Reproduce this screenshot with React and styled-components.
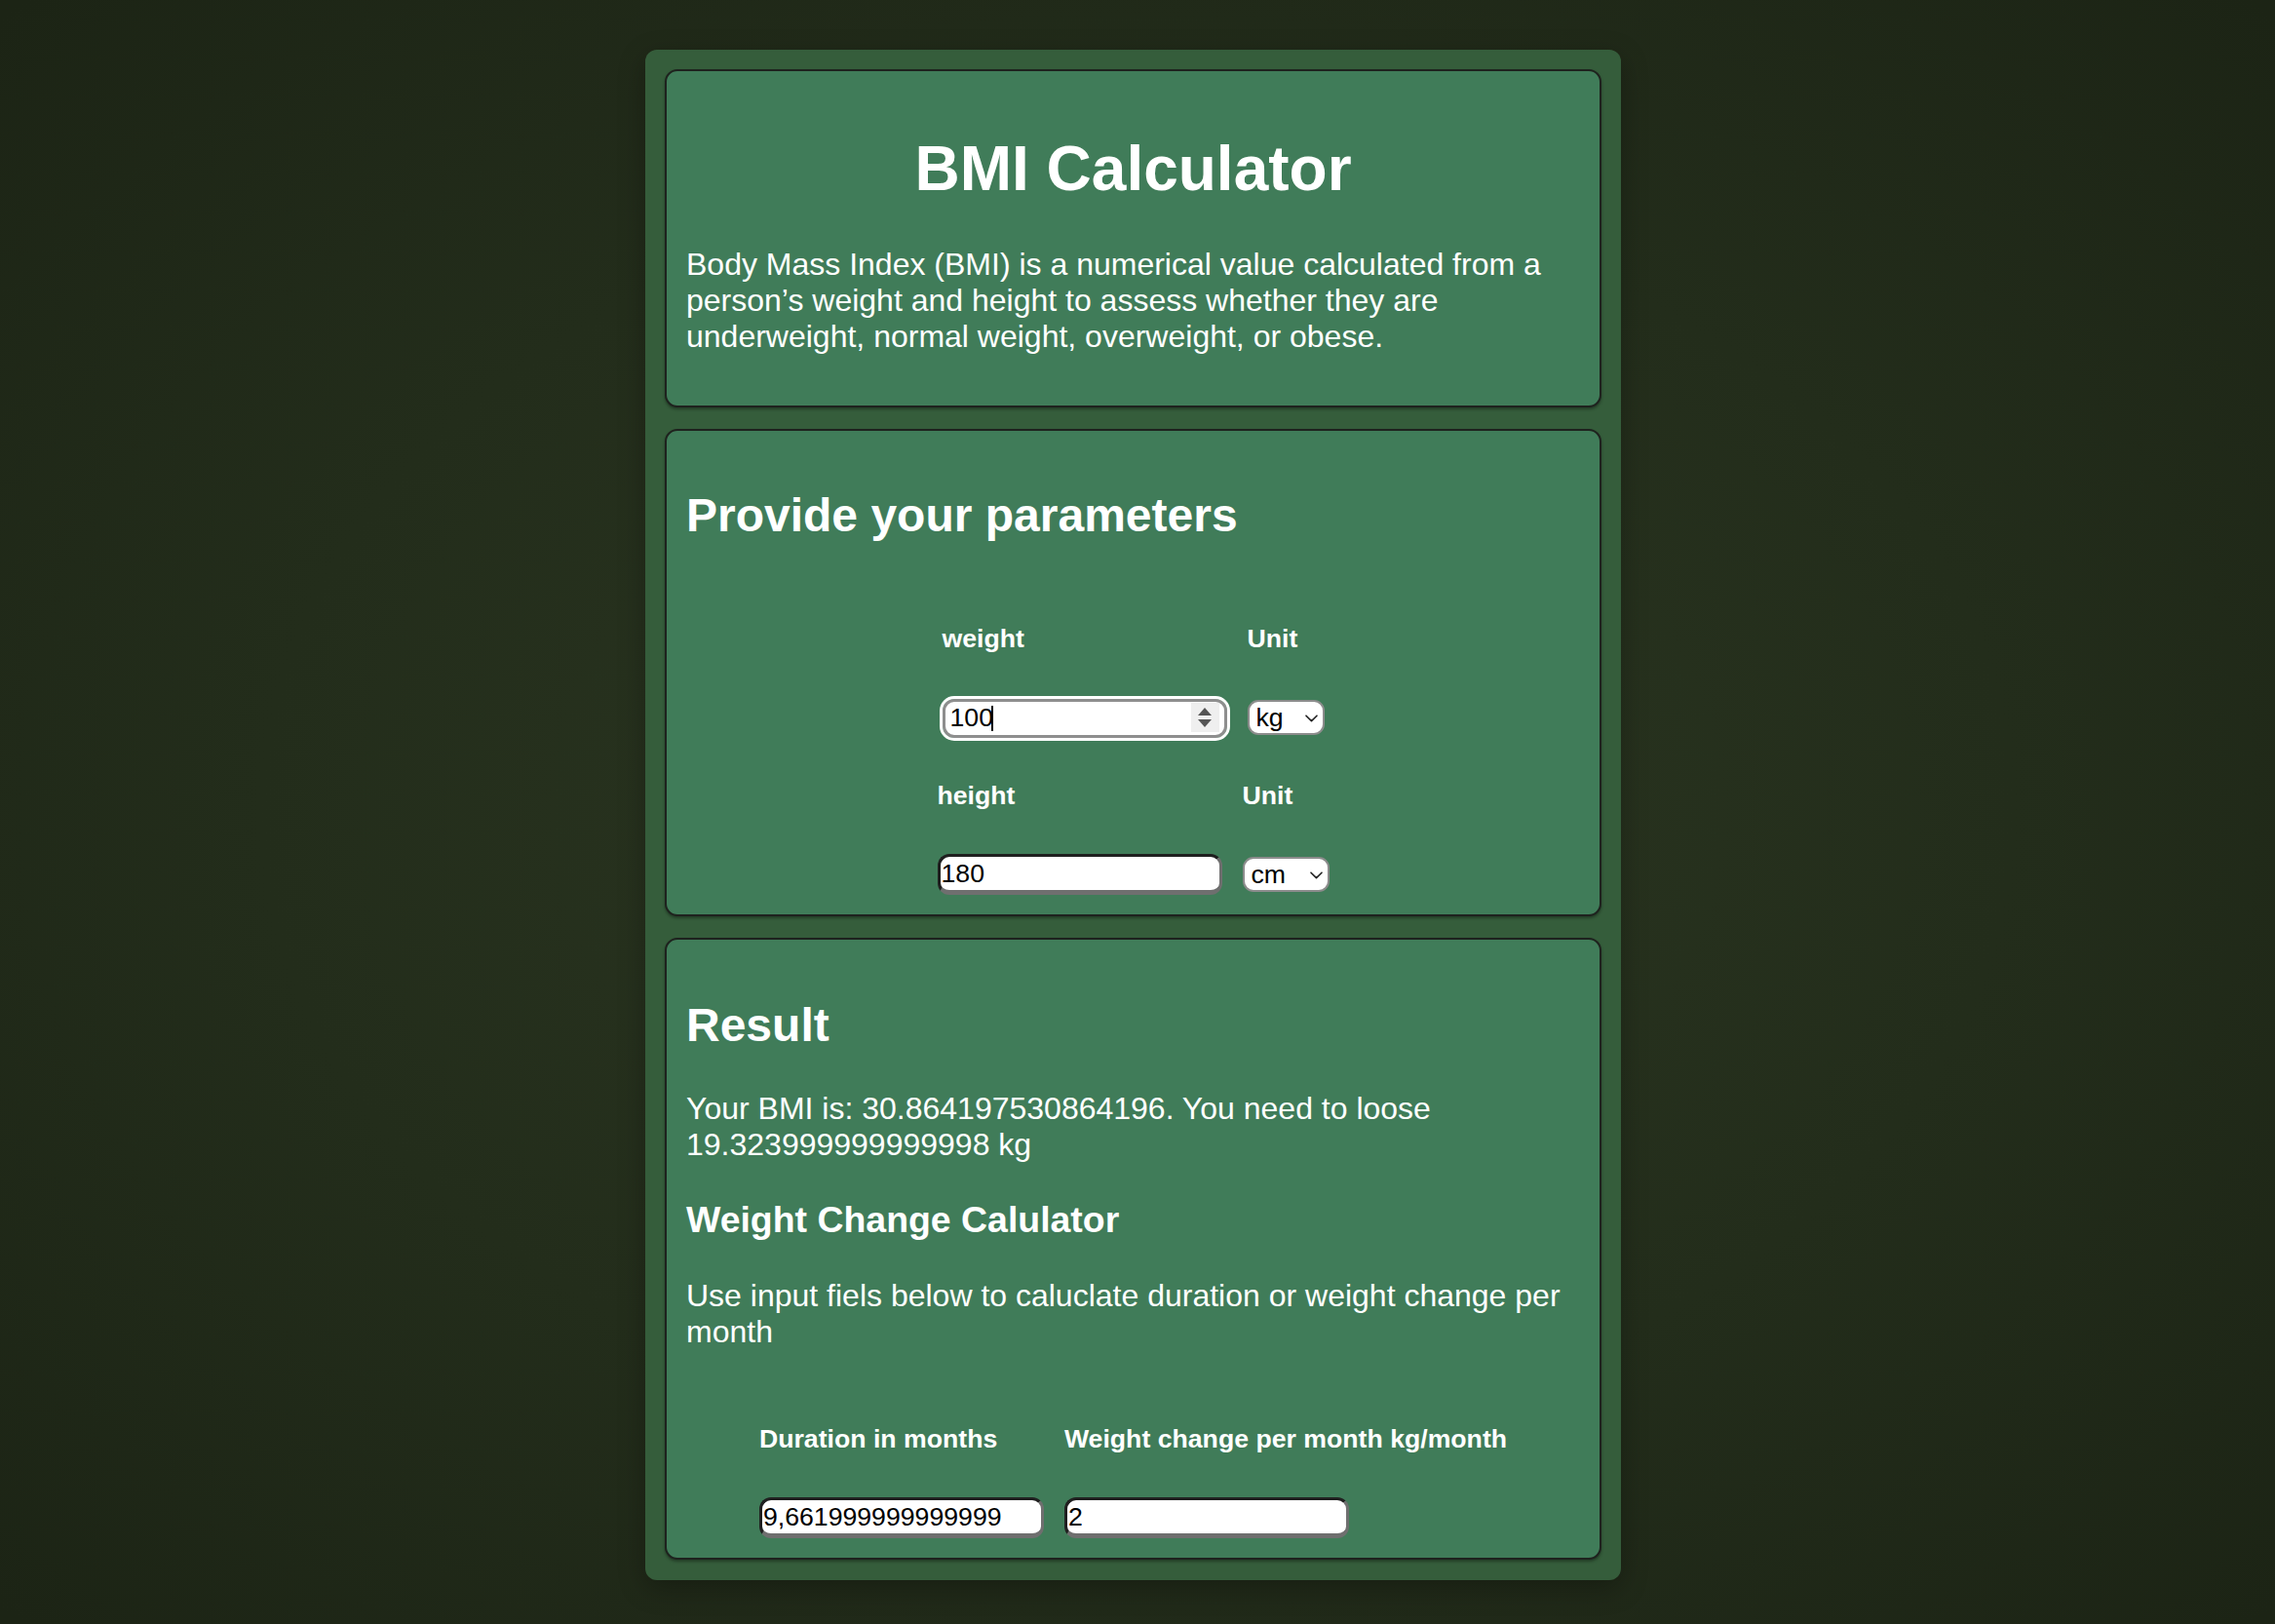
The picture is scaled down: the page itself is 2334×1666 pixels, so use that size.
import React from "react";
import styled, { createGlobalStyle } from "styled-components";

const GlobalStyle = createGlobalStyle`
  html, body {
    margin: 0;
    padding: 0;
  }
  body {
    min-height: 100vh;
    font-family: "Liberation Sans", Arial, Helvetica, sans-serif;
    color: #ffffff;
    background: radial-gradient(ellipse 70% 70% at 50% 50%, #2b3621 0%, #232d1b 55%, #1c2415 100%);
    background-attachment: fixed;
  }
`;

const Page = styled.div`
  display: flex;
  justify-content: center;
  padding: 51px 9px 48px 0;
`;

const Container = styled.main`
  width: 1001px;
  box-sizing: border-box;
  padding: 20px 20px 21px;
  display: flex;
  flex-direction: column;
  gap: 22px;
  background: #355d3b;
  border-radius: 12px;
  box-shadow: 0 8px 28px rgba(0, 0, 0, 0.28);
`;

const Card = styled.section`
  background: #407c59;
  border: 2px solid #1e221e;
  border-radius: 13px;
  padding: 20px;
  box-shadow: 0 2px 3px rgba(0, 0, 0, 0.35);
`;

const Title = styled.h1`
  font-size: 64px;
  font-weight: 700;
  text-align: center;
  margin: 42.9px 0;
  line-height: normal;
`;

const SectionTitle = styled.h2`
  font-size: 48px;
  font-weight: 700;
  margin: 39.7px 0;
  line-height: normal;
`;

const SubTitle = styled.h3`
  font-size: 37.44px;
  font-weight: 700;
  margin: 37.4px 0;
  line-height: normal;
`;

const Text = styled.p`
  font-size: 32px;
  margin: 32px 0;
  line-height: normal;
`;

const FieldRow = styled.div`
  display: flex;
  justify-content: center;
  align-items: flex-start;
  gap: 21px;
`;

const Column = styled.div`
  display: flex;
  flex-direction: column;
  align-items: flex-start;
`;

const Label = styled.h5`
  font-size: 26.67px;
  font-weight: 700;
  margin: 44.3px 0;
  line-height: normal;
  white-space: nowrap;
`;

const InputWrap = styled.div`
  position: relative;
  display: inline-block;
`;

const Field = styled.input`
  box-sizing: border-box;
  width: 292px;
  height: ${(p) => (p.$focused ? "40px" : "42px")};
  margin-top: ${(p) => (p.$focused ? "1px" : "0")};
  font-family: "Liberation Sans", Arial, Helvetica, sans-serif;
  font-size: 26.67px;
  color: #000;
  background: #fff;
  border-radius: 12px;
  padding: 0 ${(p) => (p.$focused ? "40px" : "2px")} 0 ${(p) => (p.$focused ? "5px" : "1px")};
  border-style: solid;
  border-width: 3px;
  border-color: ${(p) =>
    p.$focused ? "#8e8e8e" : "#1f1f1f #6f6f6f #6f6f6f #1f1f1f"};
  border-bottom-width: ${(p) => (p.$focused ? "3px" : "5px")};
  outline: ${(p) => (p.$focused ? "3px solid #ffffff" : "none")};
  outline-offset: 0;
`;

const Caret = styled.span`
  position: absolute;
  left: 50px;
  top: 8px;
  width: 2px;
  height: 26px;
  background: #000;
`;

const Spinner = styled.span`
  position: absolute;
  right: 8px;
  top: 5px;
  width: 29px;
  height: 30px;
  background: #efefef;
  display: flex;
  align-items: center;
  justify-content: center;
`;

const SelectWrap = styled.span`
  position: relative;
  display: inline-flex;
  margin-top: ${(p) => p.$offset || 0}px;
`;

const Select = styled.select`
  appearance: none;
  -webkit-appearance: none;
  box-sizing: border-box;
  height: 36px;
  font-family: "Liberation Sans", Arial, Helvetica, sans-serif;
  font-size: 26.67px;
  color: #000;
  background: #fff;
  border: 2px solid #8c8c8c;
  border-radius: 11px;
  padding: 0 ${(p) => p.$right}px 0 7px;
  line-height: 32px;
`;

const Chevron = styled.svg`
  position: absolute;
  right: 7px;
  top: 15px;
  width: 13px;
  height: 8px;
  pointer-events: none;
`;

function UnitSelect({ value, options, right, offset }) {
  return (
    <SelectWrap $offset={offset}>
      <Select value={value} onChange={() => {}} $right={right}>
        {options.map((o) => (
          <option key={o} value={o}>
            {o}
          </option>
        ))}
      </Select>
      <Chevron viewBox="0 0 13 8">
        <path d="M1 1.2 L6.5 6.6 L12 1.2" fill="none" stroke="#222" strokeWidth="1.6" strokeLinecap="round" strokeLinejoin="round" />
      </Chevron>
    </SelectWrap>
  );
}

export default function App() {
  return (
    <>
      <GlobalStyle />
      <Page>
        <Container>
          <Card>
            <Title>BMI Calculator</Title>
            <Text>
              Body Mass Index (BMI) is a numerical value calculated from a person’s weight and
              height to assess whether they are underweight, normal weight, overweight, or obese.
            </Text>
          </Card>

          <Card>
            <SectionTitle>Provide your parameters</SectionTitle>
            <FieldRow>
              <Column>
                <Label>weight</Label>
                <InputWrap>
                  <Field type="text" value="100" readOnly $focused />
                  <Caret />
                  <Spinner>
                    <svg width="16" height="24" viewBox="0 0 16 24">
                      <path d="M8 2 L15 10 L1 10 Z" fill="#555" />
                      <path d="M1 14 L15 14 L8 22 Z" fill="#555" />
                    </svg>
                  </Spinner>
                </InputWrap>
              </Column>
              <Column>
                <Label>Unit</Label>
                <UnitSelect value="kg" options={["kg", "lb"]} right={39} offset={2} />
              </Column>
            </FieldRow>
            <FieldRow>
              <Column>
                <Label>height</Label>
                <Field type="text" value="180" readOnly />
              </Column>
              <Column>
                <Label>Unit</Label>
                <UnitSelect value="cm" options={["cm", "in"]} right={42} offset={3} />
              </Column>
            </FieldRow>
          </Card>

          <Card>
            <SectionTitle>Result</SectionTitle>
            <Text>Your BMI is: 30.864197530864196. You need to loose 19.323999999999998 kg</Text>
            <SubTitle>Weight Change Calulator</SubTitle>
            <Text>Use input fiels below to caluclate duration or weight change per month</Text>
            <FieldRow>
              <Column>
                <Label>Duration in months</Label>
                <Field type="text" value="9,661999999999999" readOnly />
              </Column>
              <Column>
                <Label>Weight change per month kg/month</Label>
                <Field type="text" value="2" readOnly />
              </Column>
            </FieldRow>
          </Card>
        </Container>
      </Page>
    </>
  );
}
